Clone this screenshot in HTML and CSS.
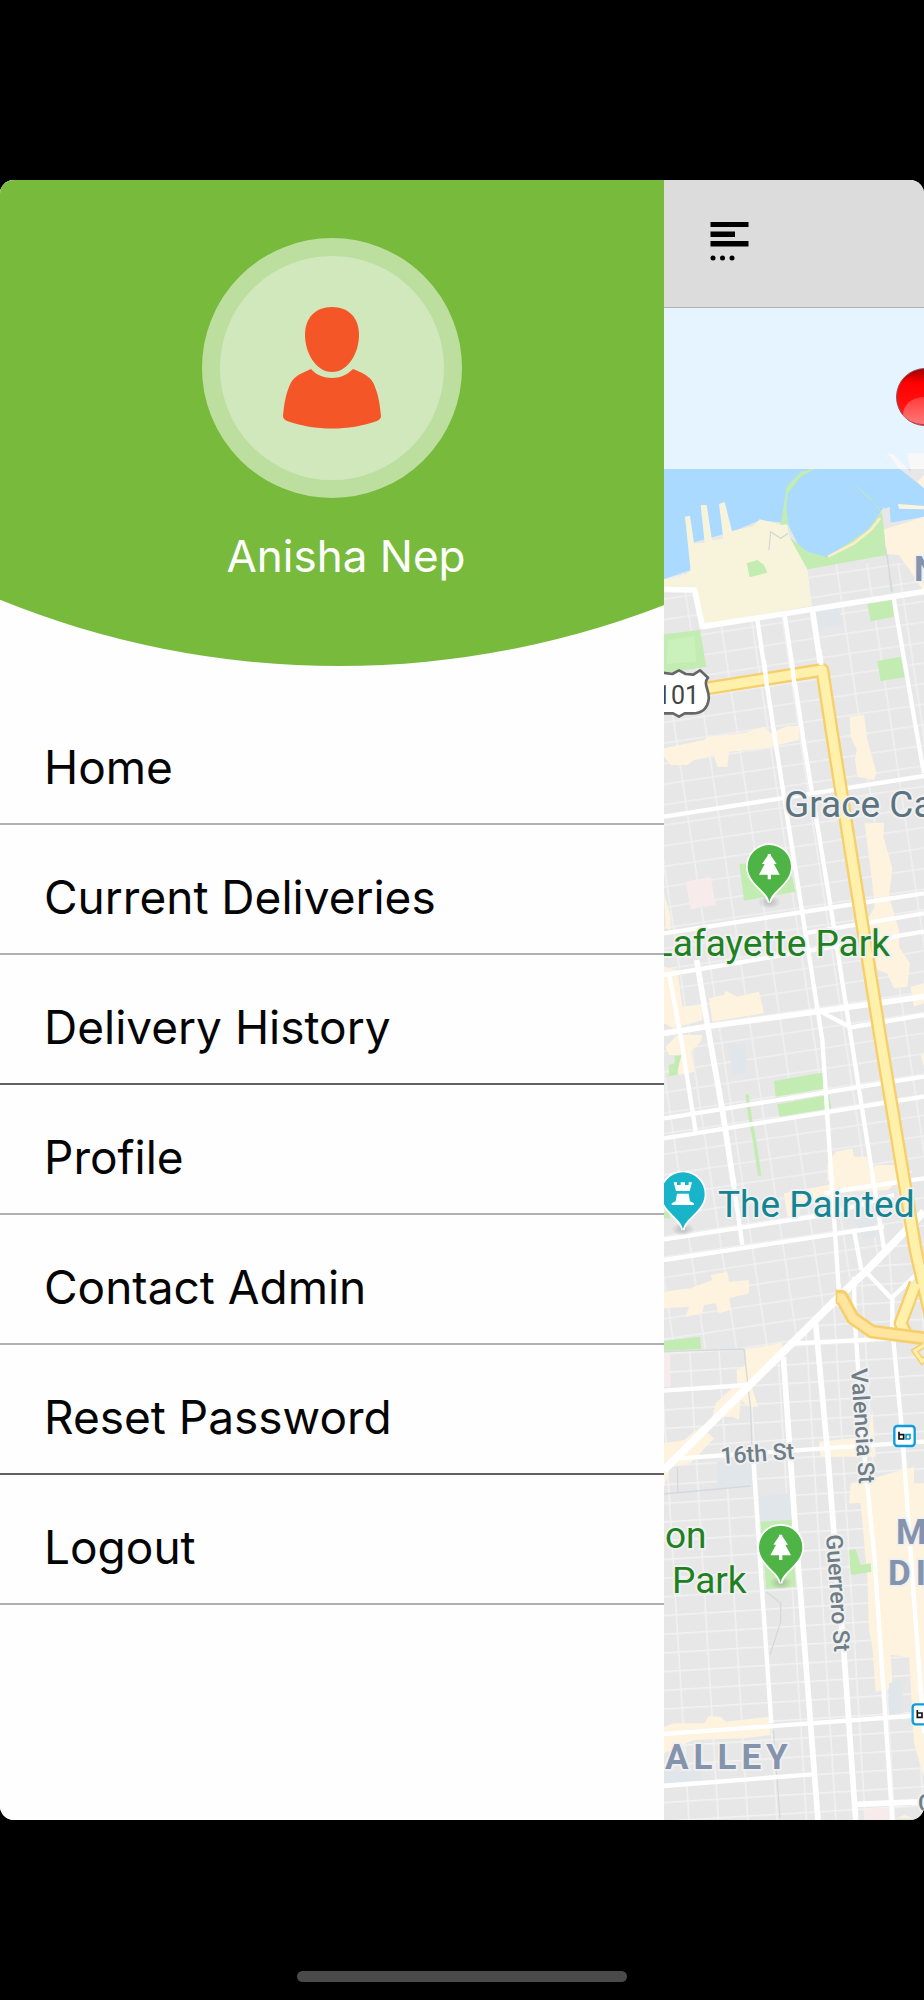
FILE: index.html
```html
<!DOCTYPE html>
<html lang="en">
<head>
<meta charset="utf-8">
<meta name="viewport" content="width=device-width, initial-scale=1">
<title>Deliveries</title>
<link rel="stylesheet" href="styles.css">
</head>
<body>
<div class="screen">
  <aside class="drawer">
    <header class="profile">
      <div class="avatar">
        <svg class="avatar-icon" viewBox="0 0 98 122" aria-hidden="true">
          <path d="M49 0C32 0 22 11 22 28C22 46 33 65 49 65S76 46 76 28C76 11 66 0 49 0Z"/>
          <path d="M28 62C33 68 41 71 49 71S64 68 70 62C82 67 89 70 92 80C96 90 97 99 98 109Q98 112 94 114C66 124 32 124 4 114Q0 112 0 109C1 99 2 90 6 80C10 69 17 67 28 62Z"/>
        </svg>
      </div>
      <h1 class="name">Anisha Nep</h1>
    </header>
    <nav class="menu">
      <a class="menu-item" href="#home">Home</a>
      <a class="menu-item" href="#current">Current Deliveries</a>
      <a class="menu-item" href="#history">Delivery History</a>
      <a class="menu-item" href="#profile">Profile</a>
      <a class="menu-item" href="#contact">Contact Admin</a>
      <a class="menu-item" href="#reset">Reset Password</a>
      <a class="menu-item" href="#logout">Logout</a>
    </nav>
  </aside>
  <main class="content">
    <div class="toolbar">
      <button class="menu-button" type="button" aria-label="Toggle menu">
        <svg class="menu-icon" viewBox="0 0 38 39" aria-hidden="true">
          <path d="M0 0H38V5H0ZM0 9.500H24.500V15H0ZM0 19H38V24.500H0Z"/>
          <circle cx="2.500" cy="36" r="2.500"/><circle cx="12" cy="36" r="2.500"/><circle cx="21.500" cy="36" r="2.500"/>
        </svg>
      </button>
    </div>
    <div class="map">
      <svg class="map-canvas" viewBox="664 308 260 1512" preserveAspectRatio="xMinYMin slice" role="img" aria-label="City map">
        <defs>
          <pattern id="gridNorth" width="92" height="61" patternUnits="userSpaceOnUse" patternTransform="rotate(-8.500)">
            <path class="hair" d="M0 20H92M30 0V61"/>
          </pattern>
          <pattern id="gridSouth" width="88" height="56" patternUnits="userSpaceOnUse" patternTransform="rotate(-3.500)">
            <path class="hair" d="M0 20H88M30 0V56"/>
          </pattern>
          <linearGradient id="ball" x1="0" y1="0" x2="0" y2="1">
            <stop offset="0" stop-color="#900"/><stop offset=".25" stop-color="#f00"/><stop offset="1" stop-color="#f22"/>
          </linearGradient>
          <linearGradient id="gloss" x1="0" y1="0" x2="0" y2="1">
            <stop offset="0" stop-color="#ff3c3c"/><stop offset="1" stop-color="#ff7878"/>
          </linearGradient>
          <radialGradient id="shade">
            <stop offset="0" stop-color="#888" stop-opacity=".5"/><stop offset="1" stop-color="#888" stop-opacity="0"/>
          </radialGradient>
          <g id="pin">
            <ellipse cx="0" cy="106" rx="34" ry="20" fill="url(#shade)"/>
            <path d="M0 108C-3 72-65 52-65 0A65 65 0 0 1 65 0C65 52 3 72 0 108Z" stroke="#fff" stroke-width="10" paint-order="stroke"/>
          </g>
          <path id="tree" fill="#fff" d="M-5-38H5V-33L22-8H14L31 24H5V38H-5V24H-31L-14-8H-22L-5-33Z"/>
        </defs>
        <g transform="translate(654 450) scale(.33333)">
          <rect class="land" x="0" y="-500" width="900" height="4700"/>
          <path fill="url(#gridNorth)" d="M30 340H810V2285L390 2690L30 2700Z"/>
          <path fill="url(#gridSouth)" d="M30 2700L390 2690L810 2285V4200H30Z"/>

          <!-- commercial blocks -->
          <path class="shop" d="M30 895L150 870L160 860L270 850L330 830L350 850L400 828L435 828V870L330 895L225 905L220 950L190 950L180 915L120 930L100 945L50 945L30 920Z"/>
          <path class="shop" d="M588 800L630 795L640 870L668 970L660 990L610 980L603 930L608 900L590 860ZM632 1120L690 1118L688 1160L715 1255L705 1340L735 1440L735 1490L768 1540L760 1610L720 1615L700 1570L670 1560L640 1410L662 1370L655 1300Z"/>
          <path class="shop" d="M30 1330L50 1400L50 1440L35 1435ZM30 1550L70 1560L85 1670L145 1665V1710L60 1735L30 1720ZM165 1645L210 1635L215 1622L250 1640L315 1625L330 1690L175 1715ZM770 1610L810 1600V1660L780 1670Z"/>
          <path class="shop" d="M35 1790L70 1755H145L140 1775L110 1805L122 1865L75 1875L70 1815L45 1815ZM545 2105L595 2095L600 2120L640 2120L645 2160L670 2145H740L775 2165L700 2220L580 2225L520 2190L520 2145ZM390 2230L550 2200L560 2240L500 2250L440 2260L435 2300L400 2300Z"/>
          <path class="shop" d="M30 2525L110 2515L175 2490L170 2475L220 2465L225 2495L285 2490V2530L225 2545L230 2580L195 2590L185 2560L150 2565L145 2590L95 2600L105 2570L30 2575ZM800 1815L810 1810V1850Z"/>
          <path class="shop" d="M275 2700L385 2678L385 2710L290 2800L312 2870L285 2870L260 2850L255 2910L235 2900L175 2900L185 2860L250 2800L248 2760L275 2745ZM30 2980L90 2970L140 2930L180 2965L110 3040L50 3050L30 3110ZM495 2975L640 2960L655 2880L665 3020L500 3020Z"/>
          <path class="shop" d="M590 3100L640 3090L780 3050V3100H810V3980L780 3880L770 3700L765 3620L710 3615L715 3700L700 3720L665 3725L655 3590L645 3540L640 3380L620 3160L585 3160ZM30 3830L60 3820L150 3820L165 3798L200 3800L215 3815L345 3800L350 3855L270 3865L120 3870L30 3910ZM730 4105L750 4095L780 4105Z"/>
          <path class="medical" d="M95 1295L170 1280L185 1365L110 1378ZM30 2710H48L50 2810H30ZM633 4075H708V4110H633Z"/>
          <path class="civic" d="M485 485L555 475L565 525L495 535ZM220 1785L275 1780L278 1870L238 1875ZM600 2310L665 2300V2360L630 2370ZM188 3035L295 3030V3105L190 3115ZM315 3140L408 3130L412 3210L320 3215ZM30 3965L140 3960V3990L30 4000ZM705 3700L745 3690L748 3790L705 3795Z"/>

          <!-- bay, shoreline and parks -->
          <path class="water" d="M30-426H810V200L700 220L690 170L640 250L520 325L440 300L400 220L320 210L235 245L110 280L110 360L30 388Z"/>
          <path class="sand" d="M30 388L85 380L110 362L93 200L108 197L120 280L152 279L140 165H158L174 271L208 266L195 162L212 156L234 243L298 228L317 208L380 224H402L407 260L460 355L472 468L150 523L130 425L122 410L30 410Z"/>
          <path class="park" d="M380 224L398 110L440 65L485 55L440 80L402 130L397 170L407 262L460 305L520 322L640 240L690 175L690 230L698 315L460 358L407 262L400 222ZM583 88L650 145L690 200L672 170Z"/>
          <path class="sand-line" d="M522 320L600 280L650 240L678 205"/>
          <path class="shop" d="M690 238L750 220L810 200V425L760 350L735 315L697 312Z"/>
          <path class="land" d="M683 180L707 170L710 218L750 215L690 238ZM700 10L720 15L770 65L760 10H810V115L735 55Z"/>
          <path class="shop" d="M732 162L810 168V178L735 176ZM790 95L810 75V115Z"/>
          <path class="park" d="M278 340L310 330L330 345L340 368L287 382ZM640 462L715 450L720 500L650 514ZM670 633L740 620L752 682L680 693ZM30 553L138 540L157 650L30 670ZM256 1243L400 1225L425 1325L270 1352ZM360 1893L512 1867L520 1915L365 1940ZM370 1963L525 1935L532 1975L377 2000Z"/>
          <path class="lawn" d="M42 570L122 558L127 635L38 642Z"/>
          <path class="park" d="M30 2673L138 2660L142 2697L30 2702ZM320 3215L412 3210L425 3410L337 3417ZM585 3300L605 3298L620 3345L650 3340L652 3365L590 3375ZM30 1880L45 1875V1845L62 1840V1818L82 1815L68 1875ZM30 2285H50L48 2305H30Z"/>
          <path class="lane" d="M279 1933L288 2000L303 2080L317 2177"/>
          <path class="trail" d="M345 300L350 245L380 265L402 250M665 293L695 295L715 425M700 315L712 425M30 2705L270 2697L290 2880L295 3030M30 3132L290 3108M70 3050L72 3128M337 3425L380 3460V3515L348 3615M358 3840L378 4105"/>

          <!-- streets -->
          <path class="street" d="M310 510L365 880L505 1770L555 2530M392 495L450 880L530 1370L592 1770L690 2395M718 440L792 870L810 970M45 1570L82 1770L125 2045M600 2340L622 2460M575 2220L510 2230"/>
          <path class="street" d="M30 1100L810 978M30 1450L810 1330M450 1450L810 1390M30 1575L810 1445M500 1685L590 1732L810 1695M30 2005L810 1880M30 2065L810 1940M30 2368L510 2295L720 2235M570 2220L810 2185M30 2430L690 2330"/>
          <path class="street" d="M640 2470L712 2545L785 2475M715 2545V2640L745 2950L772 3340L810 3850M600 2480L602 2600L625 2950L662 3330L715 4110M298 3030L322 3390L352 3820M30 2822L280 2805M420 2680L720 2665M75 3025L810 2975M30 3852L810 3795M30 4008L475 3973"/>
          <path class="street wide" d="M30 418L122 420L145 530L810 425M475 480L502 660M128 1530L168 1770L205 1980L240 2210M30 1750L170 1728L490 1685L810 1640M485 2620L520 3000L540 3250L570 3610L605 4110M388 2720L425 3250L437 3400L492 4110M610 4063L810 4055"/>
          <path class="street" d="M240 2210L265 2385"/>
          <path class="street market" d="M810 2285L640 2460L545 2550L30 3060"/>

          <!-- highways -->
          <path class="casing" d="M140 718L505 660L537 870L680 1770L785 2400L830 2600M785 2500L740 2620L755 2650"/>
          <path class="highway" d="M140 718L505 660L537 870L680 1770L785 2400L830 2600M785 2500L740 2620L755 2650"/>
          <path class="casing" d="M545 2540H562L597 2605L655 2645L810 2665"/>
          <path class="freeway" d="M550 2543H562L597 2605L655 2645L810 2665"/>
          <path class="ramp-casing" d="M810 2686L782 2703L804 2734L820 2720"/>
          <path class="ramp" d="M810 2686L782 2703L804 2734L820 2720"/>
          <path class="street" d="M330 630L340 720M412 625L422 710M497 600L502 645"/>

          <!-- route shield -->
          <path class="shield" d="M0 665L55 672L75 661L95 672L118 674L138 661L162 683C145 703 168 720 164 748C160 778 140 790 115 790H92L75 800L57 790H0Z"/>

          <!-- place pins -->
          <use href="#pin" class="pin-park" x="346" y="1250"/>
          <use href="#tree" x="346" y="1250"/>
          <use href="#pin" class="pin-park" x="380" y="3292"/>
          <use href="#tree" x="380" y="3292"/>
          <use href="#pin" class="pin-sight" x="87" y="2232"/>
          <path fill="#fff" d="M59 2197H69V2205H80V2197H93V2205H104V2197H114L107 2223H66ZM69 2231H104L108 2254L120 2260V2265H53V2260L65 2254Z"/>

          <!-- transit stops -->
          <rect class="stop" x="721" y="2928" width="61" height="60" rx="9"/>
          <rect class="stop" x="776" y="3763" width="61" height="60" rx="9"/>
          <path class="stop-dark" d="M735 2945V2967H749V2954H735M790 3780V3802H804V3789H790"/>
          <path class="stop-blue" d="M768 2967V2954H756V2967H768"/>
        </g>

        <rect class="banner" x="664" y="308" width="260" height="161"/>
        <circle cx="925" cy="397" r="28.500" fill="url(#ball)" stroke="#8a5560"/>
        <path fill="url(#gloss)" d="M903 415C903 404 913 397 925 397V424C914 424 907 420 903 415Z"/>

        <g class="labels">
          <text class="route" x="699" y="704" text-anchor="end">101</text>
          <text class="place" x="784" y="817">Grace Ca</text>
          <text class="place park-name" x="890" y="956" text-anchor="end">Lafayette Park</text>
          <text class="place sight-name" x="718" y="1217">The Painted</text>
          <text class="place park-name" x="665" y="1548">on</text>
          <text class="place park-name" x="672" y="1593">Park</text>
          <text class="road" transform="translate(721 1464) rotate(-4)">16th St</text>
          <text class="road" transform="translate(851 1369) rotate(86)">Valencia St</text>
          <text class="road" transform="translate(826 1535) rotate(86)">Guerrero St</text>
          <text class="road" x="918" y="1811">C</text>
          <text class="district" x="914" y="581">N</text>
          <text class="district" x="896" y="1544">M</text>
          <text class="district" x="888" y="1585">DI</text>
          <text class="district" x="665" y="1769">ALLEY</text>
        </g>
      </svg>
    </div>
  </main>
</div>
<footer class="system-bar"><div class="home-indicator"></div></footer>
</body>
</html>
```

FILE: styles.css
```css
* { box-sizing: border-box; }

body {
  margin: 0;
  min-height: 100vh;
  padding-top: 180px;
  display: flex;
  flex-direction: column;
  background: #000;
  font-family: Inter, "Liberation Sans", sans-serif;
}

.screen {
  flex: 1;
  display: grid;
  grid-template-columns: 664fr 260fr;
  border-radius: 14px;
  overflow: hidden;
  background: #fefefe;
}

.drawer {
  min-width: 0;
  background: #fefefe;
}

.profile {
  height: 486px;
  padding-top: 58px;
  display: flex;
  flex-direction: column;
  align-items: center;
  background: #78bb3c;
  clip-path: circle(900px at 51% calc(100% - 900px));
}

.avatar {
  width: 260px;
  height: 260px;
  display: flex;
  justify-content: center;
  align-items: center;
  border: 18px solid #bcdf9f;
  border-radius: 50%;
  background: #d1e8bd;
}

.avatar-icon {
  width: 98px;
  height: 122px;
  fill: #f55627;
}

.name {
  margin: 30px 0 0 28px;
  font-size: 44px;
  line-height: 56px;
  font-weight: 400;
  color: #fff;
}

.menu {
  display: flex;
  flex-direction: column;
  padding-top: 29px;
}

.menu-item {
  height: 130px;
  padding: 16px 44px 0;
  display: flex;
  align-items: center;
  border-bottom: 2px solid #b0b0b0;
  font-size: 46px;
  line-height: 56px;
  color: #050505;
  text-decoration: none;
}

.menu-item:nth-child(3n) { border-bottom-color: #626262; }

.content {
  min-width: 0;
  display: flex;
  flex-direction: column;
}

.toolbar {
  height: 128px;
  padding: 42px 46px 0;
  border-bottom: 1px solid #adb1b5;
  background: #dcdcdc;
}

.menu-button {
  padding: 0;
  border: 0;
  background: none;
}

.menu-icon {
  display: block;
  width: 39px;
  height: 39px;
}

.map {
  flex: 1;
  position: relative;
  overflow: hidden;
}

.map-canvas {
  position: absolute;
  inset: 0;
  width: 100%;
  height: 100%;
}

.land { fill: #e7e7e7; }
.water { fill: #aadaff; }
.sand { fill: #f8f4dc; }
.sand-line { fill: none; stroke: #fdeec8; stroke-width: 8; }
.shop { fill: #fef3df; }
.medical { fill: #f8ebec; }
.civic { fill: #e1e6ea; }
.park { fill: #c2ecb1; }
.lawn { fill: #caf0bb; }
.lane { fill: none; stroke: #c2ecb1; stroke-width: 10; }
.trail { fill: none; stroke: #d5d9dc; stroke-width: 4; }
.hair { fill: none; stroke: #f3f3f3; stroke-width: 4; }
.street { fill: none; stroke: #fff; stroke-width: 13; stroke-linejoin: round; }
.wide { stroke-width: 17; }
.market { stroke-width: 23; }
.casing { fill: none; stroke: #f6cf6b; stroke-width: 42; stroke-linejoin: round; }
.highway { fill: none; stroke: #fff0ac; stroke-width: 28; stroke-linejoin: round; }
.freeway { fill: none; stroke: #ffe59e; stroke-width: 26; stroke-linejoin: round; }
.ramp-casing { fill: none; stroke: #f6cf6b; stroke-width: 18; }
.ramp { fill: none; stroke: #fff0ac; stroke-width: 9; }
.shield { fill: #fff; stroke: #666; stroke-width: 8; stroke-linejoin: round; }
.pin-park { fill: #4eb446; }
.pin-sight { fill: #17b4ca; }
.stop { fill: #fff; stroke: #0d9ddb; stroke-width: 7; }
.stop-dark { fill: none; stroke: #111; stroke-width: 5; }
.stop-blue { fill: none; stroke: #0d9ddb; stroke-width: 5; }
.banner { fill: #fff; fill-opacity: .7; }

.labels {
  font-family: Roboto, "Liberation Sans", sans-serif;
  stroke: #f0f0f0;
  stroke-width: 4px;
  stroke-linejoin: round;
  paint-order: stroke;
}

.place { font-size: 37px; fill: #5b727f; }
.park-name { fill: #1e8020; }
.sight-name { fill: #138492; }
.road { font-size: 23px; font-weight: 500; fill: #6f7d86; }
.district { font-size: 35px; font-weight: 700; letter-spacing: 5px; fill: #8593ad; }
.route { font-size: 25px; fill: #444; stroke: none; }

.system-bar {
  height: 180px;
  padding-bottom: 18px;
  display: flex;
  justify-content: center;
  align-items: flex-end;
}

.home-indicator {
  width: 330px;
  height: 11px;
  border-radius: 6px;
  background: #4a4a4a;
}
```
